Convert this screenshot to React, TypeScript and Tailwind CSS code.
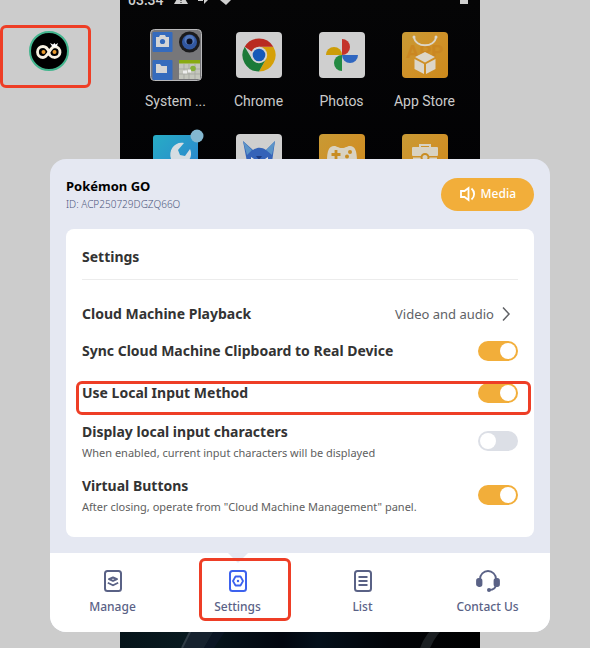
import { useState } from 'react'
import type { ReactNode } from 'react'
import { clsx } from 'clsx'

const SETTINGS = [
  { id: 'clipboard', title: 'Sync Cloud Machine Clipboard to Real Device', on: true },
  { id: 'input-method', title: 'Use Local Input Method', on: true, marked: true },
  {
    id: 'characters',
    title: 'Display local input characters',
    note: 'When enabled, current input characters will be displayed',
    on: false,
  },
  {
    id: 'virtual-buttons',
    title: 'Virtual Buttons',
    note: 'After closing, operate from "Cloud Machine Management" panel.',
    on: true,
  },
]

// red marker frame, drawn over its parent
function Marker({ className }: { className: string }) {
  return (
    <span
      aria-hidden="true"
      className={clsx('pointer-events-none absolute rounded-md border-3 border-[#ee3e26]', className)}
    />
  )
}

function FloatingBall() {
  return (
    <button type="button" aria-label="Open panel" className="block">
      <svg width="40" height="40" viewBox="0 0 40 40">
        <circle cx="20" cy="20" r="19" fill="#000" stroke="#43b58e" strokeWidth="2" />
        <path
          d="M20 21c-1.500-4-3.500-5.500-6-5.500a5.500 5.500 0 0 0 0 11c5.500 0 6.500-11 12-11a5.500 5.500 0 1 1-6 5.500"
          fill="none"
          stroke="#f8f1e2"
          strokeWidth="2.800"
        />
        <path d="M21 12l3 1.500 1.500-1.500 1 1.500 2.500-1.500-1.500 4h-4z" fill="#fff" />
        <circle cx="14.500" cy="21" r="2" fill="#ea9a2c" />
        <circle cx="25.500" cy="21" r="2" fill="#ea9a2c" />
      </svg>
    </button>
  )
}

function SystemFolder() {
  return (
    <svg width="52" height="52" viewBox="0 0 52 52">
      <rect x="0.500" y="0.500" width="51" height="51" rx="4" fill="#77777a" stroke="#b9b9bb" />
      <rect x="2.500" y="3" width="20" height="20" rx="1" fill="#356bbd" />
      <path d="M6 8h3l1-2h5l1 2h3v10H6z" fill="#d5d5d5" />
      <circle cx="12.500" cy="12.500" r="2.600" fill="#356bbd" />
      <circle cx="39.500" cy="13" r="10.500" fill="#1b1b1d" />
      <circle cx="39.500" cy="13" r="7.500" fill="#3157a0" />
      <circle cx="39.500" cy="11" r="5" fill="#5378bb" />
      <circle cx="39.500" cy="12.500" r="3" fill="#0b1022" />
      <rect x="2.500" y="31" width="20" height="20" rx="1" fill="#356bbd" />
      <path d="M6 35h4l1.500 2H17v7H6z" fill="#d5d5d5" />
      <rect x="29" y="31" width="21" height="19" fill="#c4c6bd" />
      <rect x="29" y="31" width="21" height="3.500" fill="#88aa12" />
      <path d="M29 40h21M29 45h21M34 35v15M39 35v15M45 35v15" stroke="#a9aba5" />
      <circle cx="43" cy="39.500" r="2.800" fill="#86b13a" />
      <path d="M33 43h4M38 42h3" stroke="#eee" strokeWidth="3" />
    </svg>
  )
}

function ChromeIcon() {
  return (
    <svg width="46" height="46" viewBox="0 0 46 46">
      <rect width="46" height="46" rx="4" fill="#cfcfcf" />
      <path d="M23 14.700H37.300A16.500 16.500 0 0 1 23 39.500L30 27z" fill="#d5a008" />
      <path d="M8.700 14.700A16.500 16.500 0 0 1 37.300 14.700H23l-7 5z" fill="#b92b21" />
      <path d="M8.700 14.700L16 27l7 4 7-4-7 12.500A16.500 16.500 0 0 1 8.700 14.700z" fill="#1b7a38" />
      <circle cx="23" cy="23" r="8.200" fill="#d4d4d4" />
      <circle cx="23" cy="23" r="6.300" fill="#1659b8" />
    </svg>
  )
}

function PhotosIcon() {
  return (
    <svg width="46" height="46" viewBox="0 0 46 46">
      <rect width="46" height="46" rx="4" fill="#cfcfcf" />
      <path d="M23 7a8 8 0 0 1 0 16z" fill="#c4322a" />
      <path d="M39 23a8 8 0 0 1-16 0z" fill="#2f66c0" />
      <path d="M23 39a8 8 0 0 1 0-16z" fill="#248a42" />
      <path d="M7 23a8 8 0 0 1 16 0z" fill="#cd9d08" />
    </svg>
  )
}

function AmberTile({ children }: { children: ReactNode }) {
  return (
    <svg width="46" height="46" viewBox="0 0 46 46">
      <defs>
        <linearGradient id="amber" x1="0" y1="0" x2="1" y2="1">
          <stop offset="0" stopColor="#c89a35" />
          <stop offset="0.500" stopColor="#cf9128" />
          <stop offset="1" stopColor="#cc8a1c" />
        </linearGradient>
      </defs>
      <rect width="46" height="46" rx="4" fill="url(#amber)" />
      {children}
    </svg>
  )
}

function StoreIcon() {
  return (
    <AmberTile>
      <text x="23" y="26" textAnchor="middle" fontSize="19" fontWeight="700" fill="#ca8722" className="font-['Roboto',sans-serif]">
        APP
      </text>
      <path d="M12 5c1 11 21 11 22 0" fill="none" stroke="#dcd6c8" strokeWidth="1.800" />
      <circle cx="12" cy="5" r="1.500" fill="#dcd6c8" />
      <circle cx="34" cy="5" r="1.500" fill="#dcd6c8" />
      <path d="M23 20l10 5-10 5.500L13 25z" fill="#dcd6c8" />
      <path d="M12.500 27l9.500 5v10l-9.500-5z" fill="#dcd6c8" />
      <path d="M33.500 27L24 32v10l9.500-5z" fill="#dcd6c8" />
    </AmberTile>
  )
}

function ToolIcon() {
  return (
    <svg width="54" height="54" viewBox="0 0 54 54" className="overflow-visible">
      <defs>
        <linearGradient id="aqua" x1="0" y1="0" x2="1" y2="1">
          <stop offset="0" stopColor="#27adc5" />
          <stop offset="1" stopColor="#2c7fd0" />
        </linearGradient>
      </defs>
      <rect x="4" y="5" width="45" height="46" rx="3" fill="url(#aqua)" />
      <path d="M14 44L22 29c-3-9 4-18 13-16l-6 7 2 5 5 1 5-7c4 9-4 17-12 15L20 48z" fill="#d5dde2" />
      <circle cx="48" cy="6" r="6.500" fill="#84b8d0" />
    </svg>
  )
}

function FoxIcon() {
  return (
    <svg width="46" height="46" viewBox="0 0 46 46">
      <rect width="46" height="46" rx="4" fill="#cfcfcf" />
      <path d="M7 7l10 9c4-3 9-3 13 0l9-9-3 21-13 12-12-12z" fill="#3563b8" />
      <path d="M7 7l9 9-5 5zM39 7l-9 9 6 5z" fill="#5b94c8" />
      <path d="M15 23l6 4-6 1zM32 23l-6 4 6 1z" fill="#e5e5e5" />
      <path d="M20 22l3 4 3-4" fill="#1d3c83" />
    </svg>
  )
}

function GameIcon() {
  return (
    <AmberTile>
      <path d="M15 12c-5 0-7 5-7 15 0 9 5 8 9 2h12c4 6 9 7 9-2 0-10-2-15-7-15-3 0-4 2-8 2s-5-2-8-2z" fill="#d8d2c2" />
      <path d="M17 16v9M12.500 20.500h9" stroke="#c98d22" strokeWidth="2.800" />
      <circle cx="31" cy="18" r="2" fill="#c98d22" />
      <circle cx="28" cy="22.500" r="2" fill="#c98d22" />
    </AmberTile>
  )
}

function ToolboxIcon() {
  return (
    <AmberTile>
      <path d="M18 14v-3h10v3" fill="none" stroke="#d8d2c2" strokeWidth="2" />
      <rect x="10" y="13" width="26" height="9" rx="1" fill="#d8d2c2" />
      <rect x="11" y="23.500" width="24" height="12" fill="#d8d2c2" />
      <circle cx="23" cy="23.500" r="3.500" fill="#d8d2c2" stroke="#c98d22" strokeWidth="2" />
    </AmberTile>
  )
}

const APPS = [
  { name: 'System ...', icon: <SystemFolder /> },
  { name: 'Chrome', icon: <ChromeIcon /> },
  { name: 'Photos', icon: <PhotosIcon /> },
  { name: 'App Store', icon: <StoreIcon /> },
]

const MORE_APPS = [
  { name: 'Tools', icon: <ToolIcon /> },
  { name: 'Fox', icon: <FoxIcon /> },
  { name: 'Games', icon: <GameIcon /> },
  { name: 'Toolbox', icon: <ToolboxIcon /> },
]

function Phone() {
  return (
    <div className="flex h-screen w-full max-w-[360px] flex-col overflow-hidden bg-gradient-to-b from-[#050506] via-[#010103] to-[#010103]">
      <div className="flex h-[29px] shrink-0 items-start justify-between overflow-hidden px-2">
        <div className="-mt-2 flex h-4 items-center gap-2.5 font-['Roboto',sans-serif] text-sm leading-4 font-medium text-[#d0d0d0]">
          <span>03:34</span>
          <svg width="60" height="16" viewBox="0 0 60 16" fill="#d0d0d0">
            <path d="M7 0L14 12H0z" />
            <path d="M7 6v3M7 10v1" stroke="#111" />
            <path d="M24 7h5v2h-5zM30 3l5 4-5 5z" />
            <path d="M46 0h11v8l-5 5-6-5z" />
          </svg>
        </div>
        <span className="mr-1 h-1 w-2 bg-[#cfcfcf]" />
      </div>
      <div className="grid grid-cols-4 gap-y-5 px-3.5">
        {APPS.map((app) => (
          <div key={app.name} className="flex flex-col items-center gap-2.5">
            <div className="flex h-[52px] items-center justify-center">{app.icon}</div>
            <span className="font-['Roboto',sans-serif] text-sm leading-5 whitespace-nowrap text-[#cbcbcb]">
              {app.name}
            </span>
          </div>
        ))}
        {MORE_APPS.map((app) => (
          <div key={app.name} role="img" aria-label={app.name} className="flex h-[52px] items-center justify-center">
            {app.icon}
          </div>
        ))}
      </div>
      <svg className="mt-auto w-full" height="24" viewBox="0 0 360 24" preserveAspectRatio="none">
        <defs>
          <linearGradient id="wallpaper">
            <stop offset="0" stopColor="#06141a" />
            <stop offset="0.200" stopColor="#08191f" />
            <stop offset="0.450" stopColor="#02060f" />
            <stop offset="0.550" stopColor="#04101b" />
            <stop offset="0.750" stopColor="#020408" />
            <stop offset="1" stopColor="#000" />
          </linearGradient>
        </defs>
        <rect width="360" height="24" fill="url(#wallpaper)" />
        <path d="M62 24L74 0H98L84 24Z" fill="#16222e" />
        <path d="M62 24L74 0" stroke="#2f3c46" strokeWidth="2" />
        <path d="M84 24L98 0h12L94 24Z" fill="#0b1624" />
        <path d="M300 24Q306 8 318 0h10Q316 10 310 24Z" fill="#1b1f22" />
      </svg>
    </div>
  )
}

function Switch({ id, defaultOn }: { id: string; defaultOn: boolean }) {
  const [on, setOn] = useState(defaultOn)
  return (
    <input
      id={id}
      type="checkbox"
      role="switch"
      checked={on}
      onChange={(e) => setOn(e.target.checked)}
      className="h-5 w-10 shrink-0 cursor-pointer appearance-none rounded-full bg-[#dcdfe6] p-0.5 before:block before:size-4 before:rounded-full before:bg-white checked:bg-[#f2ae3a] checked:before:translate-x-5"
    />
  )
}

function ManageIcon() {
  return (
    <svg width="24" height="24" viewBox="0 0 24 24" fill="none" stroke="currentColor" strokeWidth="2">
      <rect x="4" y="2" width="16" height="20" rx="2.500" />
      <path d="M12 8.500l4 1.700-4 1.700-4-1.700z" strokeWidth="2" strokeLinejoin="round" />
      <path d="M6.800 13.800l5.200 2.400 5.200-2.400" strokeWidth="1.800" />
    </svg>
  )
}

function SettingsIcon() {
  return (
    <svg width="24" height="24" viewBox="0 0 24 24" fill="none" stroke="currentColor" strokeWidth="2">
      <rect x="4" y="2" width="16" height="20" rx="2.500" />
      <path d="M9.500 7.500h5l2.500 4.500-2.500 4.500h-5L7 12z" strokeWidth="1.800" strokeLinejoin="round" />
      <circle cx="12" cy="12" r="1.200" fill="currentColor" stroke="none" />
    </svg>
  )
}

function ListIcon() {
  return (
    <svg width="24" height="24" viewBox="0 0 24 24" fill="none" stroke="currentColor" strokeWidth="2">
      <rect x="4" y="2" width="16" height="20" rx="2.500" />
      <path d="M7.500 8h9M7.500 12h9M7.500 16h9" strokeWidth="1.800" />
    </svg>
  )
}

function ContactIcon() {
  return (
    <svg width="24" height="24" viewBox="0 0 24 24" fill="none" stroke="currentColor" strokeWidth="1.800">
      <path d="M4 11V10a8 8 0 0 1 16 0v5c0 4-3 6-7 6" />
      <rect x="1" y="10" width="4.500" height="7" rx="1.800" fill="currentColor" />
      <rect x="18.500" y="10" width="4.500" height="7" rx="1.800" fill="currentColor" />
      <circle cx="13" cy="21" r="2" fill="currentColor" stroke="none" />
    </svg>
  )
}

const TABS = [
  { name: 'Manage', icon: <ManageIcon /> },
  { name: 'Settings', icon: <SettingsIcon />, active: true },
  { name: 'List', icon: <ListIcon /> },
  { name: 'Contact Us', icon: <ContactIcon /> },
]

function Panel() {
  return (
    <section className="w-full max-w-[500px] overflow-hidden rounded-2xl bg-[#e5e8f2]">
      <header className="flex h-[70px] items-center justify-between px-4">
        <div>
          <h1 className="text-[13px] leading-5 font-bold text-black">Pokémon GO</h1>
          <p className="text-[10px] leading-4 font-light text-[#4f587e]">ID: ACP250729DGZQ66O</p>
        </div>
        <button
          type="button"
          className="flex h-[33px] items-center gap-1 rounded-full bg-[#f2ae3a] px-[18px] text-xs font-medium text-white"
        >
          <svg width="18" height="16" viewBox="0 0 18 16" fill="none" stroke="currentColor" strokeWidth="1.800">
            <path d="M9.500 2v12L5.500 11H2V5h3.500z" />
            <path d="M12.500 2.500c3.500 3 3.500 8 0 11" />
          </svg>
          Media
        </button>
      </header>

      <div className="mx-4 mb-4 rounded-lg bg-white px-4 pt-4 pb-[13px]">
        <h2 className="border-b border-[#ececec] pb-2.5 text-sm leading-6 font-bold text-[#333]">Settings</h2>
        <div className="pt-4 text-sm text-[#333]">
          <button type="button" className="flex h-9 w-full items-center justify-between">
            <span className="font-bold">Cloud Machine Playback</span>
            <span className="flex items-center gap-1 pr-1 text-[13px] text-[#606266]">
              Video and audio
              <svg width="16" height="16" viewBox="0 0 16 16" fill="none" stroke="currentColor" strokeWidth="1.500">
                <path d="M5 1.500l6 6.500-6 6.500" />
              </svg>
            </span>
          </button>
          {SETTINGS.map((item) =>
            item.note ? (
              <div key={item.id} className="flex items-start justify-between pt-[5px] pb-[7px]">
                <label htmlFor={item.id}>
                  <span className="block leading-[22px] font-bold">{item.title}</span>
                  <span className="block text-[11px] leading-5 text-[#606060]">{item.note}</span>
                </label>
                <div className="flex pt-2.5">
                  <Switch id={item.id} defaultOn={item.on} />
                </div>
              </div>
            ) : (
              <div
                key={item.id}
                className={clsx('relative flex items-center justify-between', item.marked ? 'h-[46px]' : 'h-[38px]')}
              >
                <label htmlFor={item.id} className="font-bold">
                  {item.title}
                </label>
                <Switch id={item.id} defaultOn={item.on} />
                {item.marked && <Marker className="-right-[13px] -left-1.5 top-[11px] bottom-px" />}
              </div>
            ),
          )}
        </div>
      </div>

      <nav className="grid grid-cols-4 bg-white">
        {TABS.map((tab) => (
          <button
            key={tab.name}
            type="button"
            aria-current={tab.active ? 'page' : undefined}
            className="relative flex flex-col items-center gap-1 pt-4 pb-[15px] text-xs leading-5 font-medium text-[#5a6286]"
          >
            {tab.active && (
              <svg className="absolute top-0" width="20" height="10" viewBox="0 0 20 10" fill="#e5e8f2">
                <path d="M0 0h20L11 9q-1 1-2 0z" />
              </svg>
            )}
            <span className={tab.active ? 'text-[#3d62ee]' : undefined}>{tab.icon}</span>
            {tab.name}
            {tab.active && <Marker className="top-[5px] right-[9px] bottom-[11px] left-6" />}
          </button>
        ))}
      </nav>
    </section>
  )
}

export default function App() {
  return (
    <main className="relative flex h-screen justify-center overflow-hidden bg-[#ccc] pl-2.5 font-['Noto_Sans','Open_Sans',sans-serif]">
      <Phone />
      <div className="absolute top-[25px] left-0 h-[63px] w-[91px] pt-1.5 pl-[29px]">
        <FloatingBall />
        <Marker className="inset-0" />
      </div>
      <div className="absolute inset-x-0 top-[159px] flex justify-center pl-2.5">
        <Panel />
      </div>
    </main>
  )
}
